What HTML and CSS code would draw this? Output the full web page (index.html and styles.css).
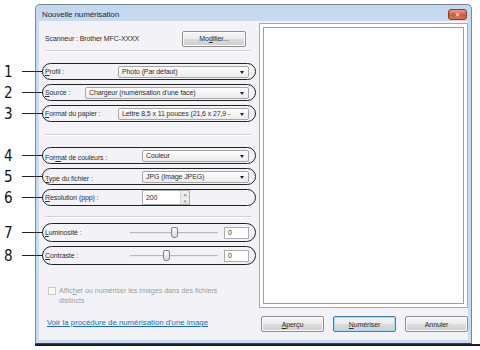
FILE: index.html
```html
<!DOCTYPE html>
<html lang="fr">
<head>
<meta charset="UTF-8">
<title>Nouvelle numérisation</title>
<link rel="stylesheet" href="styles.css">
</head>
<body>
<div class="window">
    <div class="titlebar">
        <span class="title">Nouvelle numérisation</span>
        <span class="close">&#x2715;</span>
    </div>
    <div class="client">
        <div class="left">
            <div class="scanner">
                <span>Scanneur : Brother MFC-XXXX</span>
                <span class="button modify">Mo<u>d</u>ifier...</span>
            </div>
            <div class="sep"></div>

            <div class="field first">
                <span class="callout"><b>1</b><i></i></span>
                <span class="label w73"><u>P</u>rofil :</span>
                <span class="select">Photo (Par défaut)</span>
            </div>
            <div class="field">
                <span class="callout"><b>2</b><i></i></span>
                <span class="label w40"><u>S</u>ource :</span>
                <span class="select">Chargeur (numérisation d'une face)</span>
            </div>
            <div class="field">
                <span class="callout"><b>3</b><i></i></span>
                <span class="label w73"><u>F</u>ormat du papier :</span>
                <span class="select">Lettre 8,5 x 11 pouces (21,6 x 27,9 -</span>
            </div>
            <div class="sep mid"></div>

            <div class="field first">
                <span class="callout"><b>4</b><i></i></span>
                <span class="label w97 low">For<u>m</u>at de couleurs :</span>
                <span class="select">Couleur</span>
            </div>
            <div class="field">
                <span class="callout"><b>5</b><i></i></span>
                <span class="label w97 low"><u>T</u>ype du fichier :</span>
                <span class="select">JPG (Image JPEG)</span>
            </div>
            <div class="field">
                <span class="callout"><b>6</b><i></i></span>
                <span class="label w97"><u>R</u>ésolution (ppp) :</span>
                <span class="spin"><span class="spin-text">200</span><span class="spin-btns"><em>&#x25B4;</em><em>&#x25BE;</em></span></span>
            </div>
            <div class="sep low"></div>

            <div class="field first tall">
                <span class="callout"><b>7</b><i></i></span>
                <span class="label w85"><u>L</u>uminosité :</span>
                <span class="track"><span class="thumb" style="left: 41px"></span></span>
                <span class="edit">0</span>
            </div>
            <div class="field tall">
                <span class="callout"><b>8</b><i></i></span>
                <span class="label w85"><u>C</u>ontraste :</span>
                <span class="track"><span class="thumb" style="left: 33px"></span></span>
                <span class="edit">0</span>
            </div>

            <div class="check">
                <span class="box"></span>
                <span class="check-text">Affic<u>h</u>er ou numériser les images dans des fichiers<br>distincts</span>
            </div>
            <a class="link" href="#">Voir la procédure de numérisation d'une image</a>
        </div>
        <div class="right">
            <div class="preview"><div class="preview-inner"></div></div>
            <div class="buttons">
                <span class="button"><u>A</u>perçu</span>
                <span class="button default"><u>N</u>umériser</span>
                <span class="button">Annuler</span>
            </div>
        </div>
    </div>
</div>
<div class="taskbar"></div>
</body>
</html>
```

FILE: styles.css
```css
body {
    margin: 0;
    background-color: #fff;
    font-family: "Liberation Sans", Arial, sans-serif;
    font-size: 7px;
    letter-spacing: -0.1px;
    color: #2e2e2e;
    width: 480px;
    height: 350px;
    overflow: hidden;
}
.window {
    margin: 4px 0 0 35px;
    width: 435px;
    height: 338px;
    border: 1px solid #7a8896;
    border-bottom: 1px solid #3a4450;
    border-radius: 5px 5px 0 0;
    background: linear-gradient(#c3d8ef, #c9dcf1 30px, #c8dbef);
    display: flex;
    flex-direction: column;
}
.titlebar {
    height: 16px;
    display: flex;
    align-items: center;
    justify-content: space-between;
    padding: 0 4px 0 6px;
}
.title {
    color: #1e2a38;
    font-size: 8px;
    padding-top: 2px;
}
.close {
    width: 17px;
    height: 9px;
    margin-top: 3px;
    border: 1px solid #8a3a28;
    border-radius: 3px;
    background: linear-gradient(#e8a08c, #cf5a3c 55%, #d77050);
    color: #fff;
    font-family: "DejaVu Sans", sans-serif;
    font-size: 6px;
    line-height: 9px;
    text-align: center;
    font-weight: bold;
}
.client {
    flex: 1;
    margin: 0 3px 3px 3px;
    background-color: #f3f3f7;
    display: flex;
}
.left {
    width: 217px;
    padding-left: 3px;
    display: flex;
    flex-direction: column;
}
.scanner {
    display: flex;
    align-items: center;
    justify-content: space-between;
    margin: 10px 10px 0 3px;
    height: 15px;
}
.button {
    height: 14px;
    border: 1px solid #8e8f8f;
    border-radius: 2px;
    background: linear-gradient(#f5f5f5, #ebebeb 50%, #dcdcdc 51%, #cfcfcf);
    display: flex;
    align-items: center;
    justify-content: center;
    box-shadow: inset 0 0 0 1px #fbfbfb;
}
.modify {
    width: 62px;
}
.sep {
    height: 1px;
    background-color: #d3d3d6;
    border-bottom: 1px solid #fff;
    margin: 4px 5px 0 3px;
}
.sep.mid {
    margin-top: 12px;
}
.sep.low {
    margin-top: 10px;
}
.field {
    position: relative;
    height: 15px;
    margin-top: 4px;
    border: 1.5px solid #222;
    border-radius: 10px;
    display: flex;
    align-items: center;
    padding: 0 6px 0 2px;
}
.field.first {
    margin-top: 11px;
}
.field.tall {
    height: 17px;
    margin-top: 4px;
}
.field.first.tall {
    margin-top: 5px;
}
.callout {
    position: absolute;
    right: 100%;
    top: 50%;
    width: 41px;
    margin-top: -8px;
    height: 16px;
    display: flex;
    align-items: center;
}
.callout b {
    font-family: "DejaVu Sans Condensed", "DejaVu Sans", sans-serif;
    font-weight: normal;
    font-size: 15px;
    letter-spacing: 0;
    color: #111;
    width: 18px;
    padding-left: 2px;
}
.callout i {
    flex: 1;
    height: 1.5px;
    background-color: #222;
}
.label {
    flex: none;
}
.label.low {
    padding-top: 4px;
}
.w40 { width: 40px; }
.w73 { width: 73px; }
.w85 { width: 85px; }
.w97 { width: 97px; }
.select {
    flex: 1;
    min-width: 0;
    height: 10px;
    border: 1px solid #a7a7a7;
    border-radius: 2px;
    background: linear-gradient(#fdfdfd, #ececec);
    padding: 0 12px 0 3px;
    line-height: 10px;
    white-space: nowrap;
    overflow: hidden;
    position: relative;
}
.select::after {
    content: "";
    position: absolute;
    right: 4px;
    top: 4px;
    border-left: 2.5px solid transparent;
    border-right: 2.5px solid transparent;
    border-top: 3px solid #222;
}
.spin {
    display: flex;
    width: 46px;
    height: 13px;
    border: 1px solid #abadb3;
    background-color: #fff;
}
.spin-text {
    flex: 1;
    padding-left: 3px;
    line-height: 13px;
}
.spin-btns {
    width: 8px;
    display: flex;
    flex-direction: column;
    border-left: 1px solid #d3d3d3;
}
.spin-btns em {
    flex: 1;
    font-style: normal;
    font-family: "DejaVu Sans", sans-serif;
    font-size: 5px;
    line-height: 6px;
    text-align: center;
    color: #7d8c9c;
    background: linear-gradient(#f3f3f3, #e3e3e3);
}
.track {
    position: relative;
    width: 88px;
    height: 1px;
    background-color: #b9b9b9;
    border-bottom: 1px solid #e9e9e9;
}
.thumb {
    position: absolute;
    top: -5px;
    width: 5px;
    height: 9px;
    border: 1px solid #7f7f7f;
    border-radius: 2px 2px 3px 3px;
    background: linear-gradient(#fafafa, #dcdcdc);
}
.edit {
    width: 20px;
    height: 10px;
    margin-left: 6px;
    border: 1px solid #abadb3;
    background-color: #fff;
    padding-left: 3px;
    line-height: 10px;
}
.check {
    display: flex;
    align-items: flex-start;
    margin: 21px 0 0 6px;
    color: #9c9c9c;
}
.box {
    width: 6px;
    height: 6px;
    margin-top: 1px;
    border: 1px solid #c8c8c8;
    background-color: #f8f8f8;
    flex: none;
}
.check-text {
    margin-left: 3px;
    font-size: 7.1px;
    letter-spacing: 0;
    line-height: 10px;
}
.link {
    margin: 12px 0 0 5px;
    font-size: 7.8px;
    letter-spacing: 0;
    color: #1a6bbf;
    text-decoration: underline;
}
.right {
    flex: 1;
    display: flex;
    flex-direction: column;
    padding: 2px 1px 0 3px;
}
.preview {
    height: 277px;
    border: 1px solid #a8a8a8;
    padding: 3px;
    background-color: #fff;
}
.preview-inner {
    height: 275px;
    border: 1px solid #9f9f9f;
    background-color: #fff;
}
.buttons {
    display: flex;
    gap: 9px;
    margin: 8px 0 0 2px;
}
.buttons .button {
    width: 61px;
}
.buttons .default {
    border-color: #3c7fb1;
    box-shadow: inset 0 0 0 1px #a9dbf6;
}
.taskbar {
    margin-left: 35px;
    height: 2px;
    background-color: #1b2128;
}
```
